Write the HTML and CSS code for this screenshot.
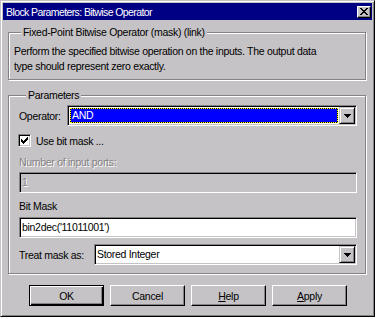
FILE: index.html
```html
<!DOCTYPE html>
<html>
<head>
    <meta charset="UTF-8">
    <title>Block Parameters: Bitwise Operator</title>
    <link rel="stylesheet" href="styles.css">
</head>
<body>
    <div class="window">
        <div class="caption">
            <span class="caption-text">Block Parameters: Bitwise Operator</span>
            <span class="close-btn">
                <svg width="8" height="7" viewBox="0 0 8 7" shape-rendering="crispEdges">
                    <path d="M0 0h2v1h-2zM6 0h2v1h-2zM1 1h2v1h-2zM5 1h2v1h-2zM2 2h4v1h-4zM3 3h2v1h-2zM2 4h4v1h-4zM1 5h2v1h-2zM5 5h2v1h-2zM0 6h2v1h-2zM6 6h2v1h-2z" fill="#000"/>
                </svg>
            </span>
        </div>

        <div class="dialog-body">
            <div class="group group-desc">
                <div class="group-title">Fixed-Point Bitwise Operator (mask) (link)</div>
                <p class="desc">Perform the specified bitwise operation on the inputs. The output data<br>type should represent zero exactly.</p>
            </div>

            <div class="group group-params">
                <div class="group-title">Parameters</div>

                <div class="row row-operator">
                    <span class="row-label label-operator">Operator:</span>
                    <div class="field combo">
                        <div class="combo-value">
                            <span class="selected">AND</span>
                        </div>
                        <span class="combo-btn">
                            <svg width="7" height="4" viewBox="0 0 7 4" shape-rendering="crispEdges">
                                <path d="M0 0h7v1h-7zM1 1h5v1h-5zM2 2h3v1h-3zM3 3h1v1h-1z" fill="#000"/>
                            </svg>
                        </span>
                    </div>
                </div>

                <div class="row row-check">
                    <span class="checkbox">
                        <svg width="7" height="7" viewBox="0 0 7 7" shape-rendering="crispEdges">
                            <path d="M6 0h1v3h-1zM5 1h1v3h-1zM4 2h1v3h-1zM0 2h1v3h-1zM1 3h1v3h-1zM2 4h1v3h-1zM3 3h1v3h-1z" fill="#000"/>
                        </svg>
                    </span>
                    <span class="check-label">Use bit mask ...</span>
                </div>

                <div class="field-label disabled-text label-ports">Number of input ports:</div>
                <div class="field edit edit-disabled"><span class="disabled-text">1</span></div>

                <div class="field-label label-mask">Bit Mask</div>
                <div class="field edit">bin2dec('11011001')</div>

                <div class="row row-treat">
                    <span class="row-label label-treat">Treat mask as:</span>
                    <div class="field combo">
                        <div class="combo-value">
                            <span class="plain-value">Stored Integer</span>
                        </div>
                        <span class="combo-btn">
                            <svg width="7" height="4" viewBox="0 0 7 4" shape-rendering="crispEdges">
                                <path d="M0 0h7v1h-7zM1 1h5v1h-5zM2 2h3v1h-3zM3 3h1v1h-1z" fill="#000"/>
                            </svg>
                        </span>
                    </div>
                </div>
            </div>

            <div class="buttons">
                <span class="btn btn-default">OK</span>
                <span class="btn">Cancel</span>
                <span class="btn"><u>H</u>elp</span>
                <span class="btn"><u>A</u>pply</span>
            </div>
        </div>
    </div>
</body>
</html>
```

FILE: styles.css
```css
body {
    margin: 0;
    background: #fff;
    font-family: "Liberation Sans", Arial, sans-serif;
    font-size: 10.5px;
    letter-spacing: -0.3px;
    color: #000;
}
.window {
    width: 375px;
    height: 317px;
    box-sizing: border-box;
    background: #c6c3c6;
    border: 1px solid;
    border-color: #c6c3c6 #000 #000 #c6c3c6;
    box-shadow: inset 1px 1px #fff, inset -1px -1px #848284;
    padding: 2px;
    display: flex;
    flex-direction: column;
}
.caption {
    height: 17px;
    background: #000084;
    color: #fff;
    display: flex;
    align-items: center;
    justify-content: space-between;
    padding: 0 1px 0 3px;
}
.caption-text {
    letter-spacing: -0.6px;
}
.close-btn {
    width: 14px;
    height: 12px;
    box-sizing: border-box;
    background: #c6c3c6;
    border: 1px solid;
    border-color: #fff #000 #000 #fff;
    box-shadow: inset -1px -1px #848284;
    display: flex;
    align-items: center;
    justify-content: center;
}
.dialog-body {
    flex: 1;
    display: flex;
    flex-direction: column;
    padding: 12px 6px 0 5px;
}

/* etched group boxes */
.group {
    border: 1px solid #848284;
    box-shadow: inset 1px 1px #fff, 1px 1px #fff;
}
.group-title {
    display: table;
    margin: -8px 0 0 7px;
    padding: 0 2px;
    line-height: 14px;
    background: #c6c3c6;
}
.group-desc {
    padding: 0 0 5px 5px;
}
.desc {
    margin: 5px 0 0;
    line-height: 15px;
}
.group-params {
    margin-top: 15px;
    padding: 0 8px 8px 10px;
}

.row {
    display: flex;
    align-items: center;
}
.row-operator {
    margin-top: 3px;
}
.label-operator {
    width: 48px;
}
.label-treat {
    width: 75px;
}
.row-check {
    margin-top: 8px;
    height: 13px;
}
.row-treat {
    margin-top: 6px;
}
.row .combo {
    flex: 1;
}

/* sunken fields */
.field {
    box-sizing: border-box;
    height: 21px;
    border: 1px solid;
    border-color: #848284 #fff #fff #848284;
    box-shadow: inset 1px 1px #000, inset -1px -1px #c6c3c6;
    background: #fff;
}
.edit {
    padding: 0 2px;
    line-height: 19px;
}
.edit-disabled {
    background: #c6c3c6;
    margin-top: 3px;
}
.field-label {
    line-height: 14px;
}
.label-ports {
    margin-top: 8px;
}
.label-mask {
    margin-top: 6px;
}
.label-mask + .edit {
    margin-top: 4px;
}
.disabled-text {
    color: #848284;
    text-shadow: 1px 1px 0 #fff;
}

.combo {
    display: flex;
    padding: 1px;
}
.combo-value {
    flex: 1;
    display: flex;
    padding: 1px;
}
.selected {
    flex: 1;
    color: #fff;
    padding-left: 1px;
    line-height: 13px;
    border: 1px dotted #ff0;
    background: linear-gradient(#00f, #00f) padding-box, linear-gradient(#000, #000) border-box;
}
.plain-value {
    line-height: 15px;
}
.combo-btn {
    width: 16px;
    height: 17px;
    box-sizing: border-box;
    background: #c6c3c6;
    border: 1px solid;
    border-color: #c6c3c6 #000 #000 #c6c3c6;
    box-shadow: inset 1px 1px #fff, inset -1px -1px #848284;
    display: flex;
    align-items: center;
    justify-content: center;
}

.checkbox {
    width: 13px;
    height: 13px;
    box-sizing: border-box;
    margin-left: -1px;
    background: #fff;
    border: 1px solid;
    border-color: #848284 #fff #fff #848284;
    box-shadow: inset 1px 1px #000, inset -1px -1px #c6c3c6;
    display: flex;
    align-items: center;
    justify-content: center;
}
.check-label {
    margin-left: 5px;
}

/* push buttons */
.buttons {
    display: flex;
    gap: 6px;
    margin-top: 11px;
    padding-left: 21px;
}
.btn {
    width: 75px;
    height: 21px;
    box-sizing: border-box;
    background: #c6c3c6;
    border: 1px solid;
    border-color: #fff #000 #000 #fff;
    box-shadow: inset -1px -1px #848284;
    display: flex;
    align-items: center;
    justify-content: center;
}
.btn-default {
    border-color: #000;
    box-shadow: inset 1px 1px #fff, inset -1px -1px #000, inset -2px -2px #848284;
}
```
